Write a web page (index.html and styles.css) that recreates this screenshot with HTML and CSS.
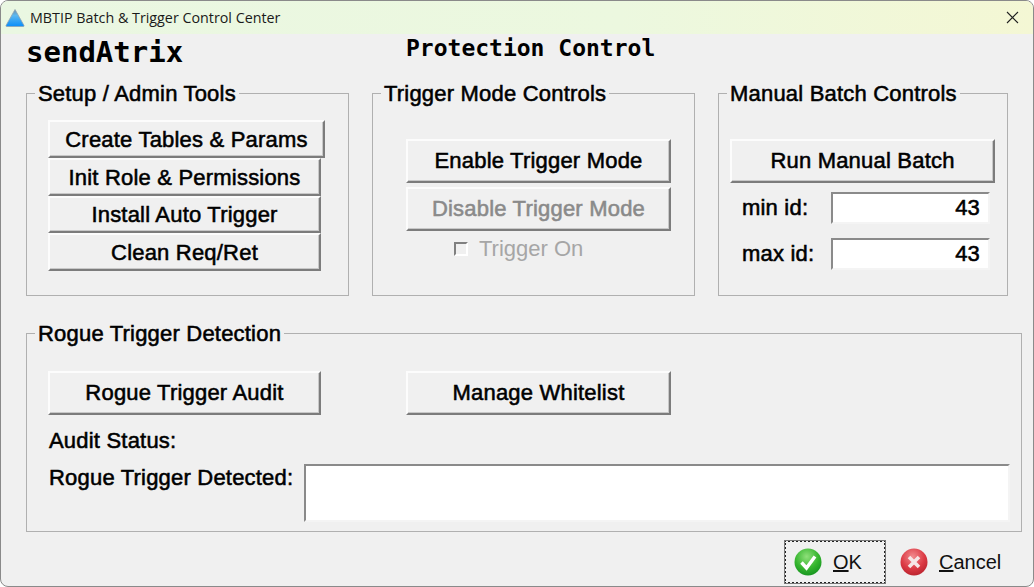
FILE: index.html
```html
<!DOCTYPE html>
<html lang="en">
<head>
    <meta charset="UTF-8">
    <meta name="viewport" content="width=device-width, initial-scale=1.0">
    <title>MBTIP Batch &amp; Trigger Control Center</title>
    <link rel="stylesheet" href="styles.css">
</head>
<body>
    <div class="window">
        <div class="titlebar">
            <svg class="app-icon" width="22" height="20" viewBox="0 0 22 20">
                <defs>
                    <linearGradient id="triFill" x1="0" y1="0" x2="0" y2="1">
                        <stop offset="0" stop-color="#6f8fa8"/>
                        <stop offset="0.35" stop-color="#5cb8f0"/>
                        <stop offset="1" stop-color="#0a8dfa"/>
                    </linearGradient>
                </defs>
                <path d="M11 1.5 L20 17.5 Q20.3 18.5 19 18.5 L3 18.5 Q1.7 18.5 2 17.5 Z" fill="url(#triFill)" stroke="#8fa3b3" stroke-width="0.8"/>
            </svg>
            <span class="title-text">MBTIP Batch &amp; Trigger Control Center</span>
            <svg class="close-icon" width="13" height="13" viewBox="0 0 13 13">
                <path d="M1 1 L12 12 M12 1 L1 12" stroke="#222" stroke-width="1.1" fill="none"/>
            </svg>
        </div>

        <div class="content">
            <div class="heading">
                <span class="brand">sendAtrix</span>
                <span class="subtitle">Protection Control</span>
            </div>

            <div class="group-row">
                <fieldset class="group group-setup">
                    <legend>Setup / Admin Tools</legend>
                    <div class="stack">
                        <button class="btn btn-first">Create Tables &amp; Params</button>
                        <button class="btn btn-tool">Init Role &amp; Permissions</button>
                        <button class="btn btn-tool">Install Auto Trigger</button>
                        <button class="btn btn-tool">Clean Req/Ret</button>
                    </div>
                </fieldset>

                <fieldset class="group group-trigger">
                    <legend>Trigger Mode Controls</legend>
                    <div class="stack stack-gap">
                        <button class="btn btn-large">Enable Trigger Mode</button>
                        <button class="btn btn-large btn-disabled">Disable Trigger Mode</button>
                    </div>
                    <div class="check-row">
                        <span class="check-box"></span>
                        <span>Trigger On</span>
                    </div>
                </fieldset>

                <fieldset class="group group-manual">
                    <legend>Manual Batch Controls</legend>
                    <button class="btn btn-large">Run Manual Batch</button>
                    <div class="id-row id-row-first">
                        <label for="minId">min id:</label>
                        <input id="minId" type="text" value="43">
                    </div>
                    <div class="id-row">
                        <label for="maxId">max id:</label>
                        <input id="maxId" type="text" value="43">
                    </div>
                </fieldset>
            </div>

            <fieldset class="group group-rogue">
                <legend>Rogue Trigger Detection</legend>
                <div class="rogue-buttons">
                    <button class="btn btn-audit">Rogue Trigger Audit</button>
                    <button class="btn btn-large">Manage Whitelist</button>
                </div>
                <div class="audit-status">Audit Status:</div>
                <div class="detected-row">
                    <label for="detected">Rogue Trigger Detected:</label>
                    <textarea id="detected"></textarea>
                </div>
            </fieldset>

            <div class="actions">
                <button class="dlg-btn dlg-ok">
                    <svg width="28" height="28" viewBox="0 0 28 28">
                        <defs>
                            <radialGradient id="okFill" cx="0.45" cy="0.3" r="0.8">
                                <stop offset="0" stop-color="#8fe07a"/>
                                <stop offset="0.55" stop-color="#35b52e"/>
                                <stop offset="1" stop-color="#0d8a1c"/>
                            </radialGradient>
                        </defs>
                        <circle cx="14" cy="14" r="13.5" fill="url(#okFill)"/>
                        <path d="M7.5 14.5 L12.5 20 L21 8.5" stroke="#fff" stroke-width="3.4" fill="none"/>
                    </svg>
                    <span><u>O</u>K</span>
                </button>
                <button class="dlg-btn dlg-cancel">
                    <svg width="28" height="28" viewBox="0 0 28 28">
                        <defs>
                            <radialGradient id="cancelFill" cx="0.45" cy="0.3" r="0.8">
                                <stop offset="0" stop-color="#f28a8e"/>
                                <stop offset="0.55" stop-color="#dc3a44"/>
                                <stop offset="1" stop-color="#b01c28"/>
                            </radialGradient>
                        </defs>
                        <circle cx="14" cy="14" r="13.5" fill="url(#cancelFill)"/>
                        <path d="M9 9 L19 19 M19 9 L9 19" stroke="#f6e6e6" stroke-width="3.6" fill="none"/>
                    </svg>
                    <span><u>C</u>ancel</span>
                </button>
            </div>
        </div>
    </div>
</body>
</html>
```

FILE: styles.css
```css
html, body {
    margin: 0;
    padding: 0;
    background-color: #fff;
}
body {
    font-family: "Liberation Sans", Arial, sans-serif;
    color: #000;
}
* {
    box-sizing: border-box;
}
.window {
    width: 1034px;
    height: 587px;
    overflow: hidden;
    background-color: #f0f0f0;
    border: 1px solid #8a8a8a;
    border-radius: 8px;
}
.titlebar {
    height: 33px;
    display: flex;
    align-items: center;
    padding-left: 3px;
    padding-right: 14px;
    background: linear-gradient(90deg, #eaf7e2 0%, #ecf8df 60%, #f4f7d4 100%);
}
.app-icon {
    margin-right: 4px;
}
.title-text {
    flex: 1;
    font-family: "Open Sans", sans-serif;
    font-size: 14.3px;
    color: #1a1a1a;
}
.content {
    padding: 0 0 0 25px;
}
.heading {
    height: 48px;
    display: flex;
    align-items: flex-start;
    font-family: "DejaVu Sans Mono", monospace;
    font-weight: bold;
}
.brand {
    width: 380px;
    font-size: 29px;
    line-height: 36px;
}
.subtitle {
    font-size: 23px;
    line-height: 28px;
}
.group-row {
    display: flex;
    gap: 23px;
}
.group {
    margin: 0;
    min-width: 0;
    border: 1px solid #b0b0b0;
    padding: 0;
}
/* the heavy control text: regular face, thickened like the old GDI fake bold */
.group legend, .btn, .id-row, .id-row input, .audit-status, .detected-row label {
    font-size: 22px;
    letter-spacing: 0.2px;
    -webkit-text-stroke: 0.55px #000;
}
.group legend {
    height: 22px;
    padding: 2px 3px 0;
    line-height: 20px;
}
.group-setup, .group-trigger {
    width: 323px;
    height: 214px;
}
.group-manual {
    width: 290px;
    height: 214px;
    padding: 35px 12px 0 11px;
}
.group-manual legend {
    margin-left: -3px;
}
.group-setup {
    padding: 16px 0 0 21px;
}
.group-setup legend, .group-rogue legend {
    margin-left: -13px;
}
.group-trigger {
    padding: 35px 0 0 33px;
}
.group-trigger legend {
    margin-left: -25px;
}
.stack {
    display: flex;
    flex-direction: column;
    align-items: flex-start;
}
.stack-gap {
    gap: 4px;
}
.btn {
    display: block;
    padding: 0;
    font-family: inherit;
    color: #000;
    background-color: #f0f0f0;
    border-style: solid;
    border-width: 2px;
    border-color: #fcfcfc #7c7c7c #7c7c7c #fcfcfc;
    box-shadow: inset -1px -1px 0 #c8c8c8;
}
.btn-first {
    width: 277px;
    height: 38px;
    padding-top: 2px;
}
.btn-tool {
    width: 273px;
    height: 37.5px;
    padding-top: 2px;
}
.btn-large {
    width: 265px;
    height: 44px;
}
.btn-audit {
    width: 273px;
    height: 44px;
}
.btn-disabled {
    color: #8a8a8a;
    -webkit-text-stroke: 0.55px #8a8a8a;
}
.check-row {
    display: flex;
    align-items: center;
    gap: 11px;
    margin-top: 5px;
    margin-left: 48px;
    font-size: 22px;
    color: #a6a6a6;
}
.check-box {
    width: 14px;
    height: 14px;
    background-color: #f0f0f0;
    border: 2px solid;
    border-color: #808080 #fff #fff #808080;
}
.id-row {
    display: flex;
    align-items: center;
    height: 32px;
    margin-top: 14px;
    padding-left: 12px;
}
.id-row-first {
    margin-top: 9px;
}
.id-row label {
    width: 89px;
}
.id-row input {
    width: 159px;
    height: 32px;
    padding: 0 8px 0 0;
    font-family: inherit;
    text-align: right;
    outline: none;
    background-color: #fff;
    border-style: solid;
    border-width: 2px;
    border-color: #8a8a8a #f4f4f4 #f4f4f4 #8a8a8a;
}
.group-rogue {
    width: 996px;
    height: 210px;
    margin-top: 26px;
    padding: 27px 0 0 21px;
}
.rogue-buttons {
    display: flex;
    gap: 85px;
}
.audit-status {
    margin-top: 14px;
    padding-left: 1px;
    line-height: 24px;
}
.detected-row {
    display: flex;
    align-items: flex-start;
    margin-top: 11px;
    padding-left: 1px;
}
.detected-row label {
    width: 255px;
    line-height: 24px;
    margin-top: 2px;
}
.detected-row textarea {
    width: 706px;
    height: 58px;
    resize: none;
    outline: none;
    background-color: #fff;
    border-style: solid;
    border-width: 2px;
    border-color: #8a8a8a #f4f4f4 #f4f4f4 #8a8a8a;
}
.actions {
    display: flex;
    margin-top: 8px;
    padding-left: 758px;
}
.dlg-btn {
    display: flex;
    align-items: center;
    height: 44px;
    padding: 0;
    font-family: inherit;
    font-size: 20px;
    color: #111;
    background: none;
    border: none;
}
.dlg-ok {
    width: 102px;
    padding-left: 8px;
    gap: 11px;
    border: 2px dotted #222;
    outline: 1px solid #777;
    outline-offset: -1px;
}
.dlg-cancel {
    margin-left: 14px;
    gap: 11px;
}
```
